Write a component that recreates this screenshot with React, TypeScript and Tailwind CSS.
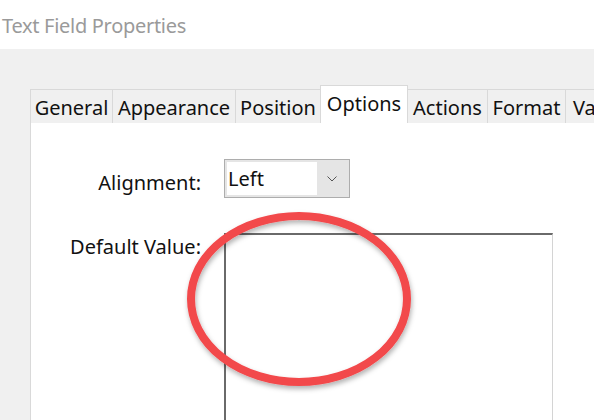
import React from "react";

const tabs = [
  { name: "General", w: 82 },
  { name: "Appearance", w: 123 },
  { name: "Position", w: 85 },
  { name: "Options", w: 87, active: true },
  { name: "Actions", w: 80 },
  { name: "Format", w: 78 },
  { name: "Validate", w: 90 },
];

export default function App() {
  return (
    <div
      className="relative w-[594px] h-[420px] overflow-hidden bg-[#f0f0f0] text-[#111]"
      style={{ fontFamily: '"Noto Sans", "Open Sans", sans-serif' }}
    >
      <div className="h-[49px] bg-white pl-[2px] pt-[11px] text-[20px] leading-[30px] tracking-[-0.3px] text-[#9a9a9a] whitespace-nowrap">
        Text Field Properties
      </div>
      <div className="pl-[30px] pt-[36px]">
        <div className="flex items-end h-[38px] whitespace-nowrap">
          {tabs.map((t) =>
            t.active ? (
              <div
                key={t.name}
                className="relative z-10 -ml-px h-[38px] flex-none border border-b-0 border-[#d9d9d9] bg-white text-center text-[20px] leading-[36px]"
                style={{ width: t.w + 1 }}
              >
                {t.name}
              </div>
            ) : (
              <div
                key={t.name}
                className="-ml-px first:ml-0 h-[34px] flex-none border border-b-0 border-[#d9d9d9] bg-[#f0f0f0] text-center text-[20px] leading-[36px]"
                style={{ width: t.w + 1 }}
              >
                {t.name}
              </div>
            )
          )}
        </div>
        <div className="-mt-px h-[300px] border-l border-t border-[#d9d9d9] bg-white pt-[36px]">
          <div className="flex items-start">
            <div className="mt-[10px] w-[170px] text-right text-[20px] leading-[28px]">Alignment:</div>
            <div className="ml-[23px] flex h-[39px] w-[126px] border border-[#adadad] bg-[#e5e5e5] p-[2px]">
              <div className="flex-1 bg-white pl-[1px] text-[20px] leading-[33px]">Left</div>
              <div className="flex w-[30px] items-center justify-center">
                <svg width="10" height="6" viewBox="0 0 10 6">
                  <path d="M0.5 0.5 L5 5 L9.5 0.5" fill="none" stroke="#555" strokeWidth="1" />
                </svg>
              </div>
            </div>
          </div>
          <div className="mt-[35px] flex items-start">
            <div className="w-[170px] text-right text-[20px] leading-[28px]">Default Value:</div>
            <div className="ml-[23px] h-[200px] w-[329px] border-l-2 border-t-2 border-r border-l-[#6a6a6a] border-t-[#6a6a6a] border-r-[#d4d4d4] bg-white" />
          </div>
        </div>
      </div>
      <svg
        className="absolute left-0 top-0 pointer-events-none"
        width="594"
        height="420"
        viewBox="0 0 594 420"
      >
        <defs>
          <filter id="sh" x="-20%" y="-20%" width="140%" height="140%">
            <feDropShadow dx="1" dy="3" stdDeviation="2.5" floodColor="#000" floodOpacity="0.3" />
          </filter>
        </defs>
        <ellipse
          cx="299"
          cy="299"
          rx="108"
          ry="83"
          fill="none"
          stroke="#f2484b"
          strokeWidth="8"
          filter="url(#sh)"
        />
      </svg>
    </div>
  );
}
